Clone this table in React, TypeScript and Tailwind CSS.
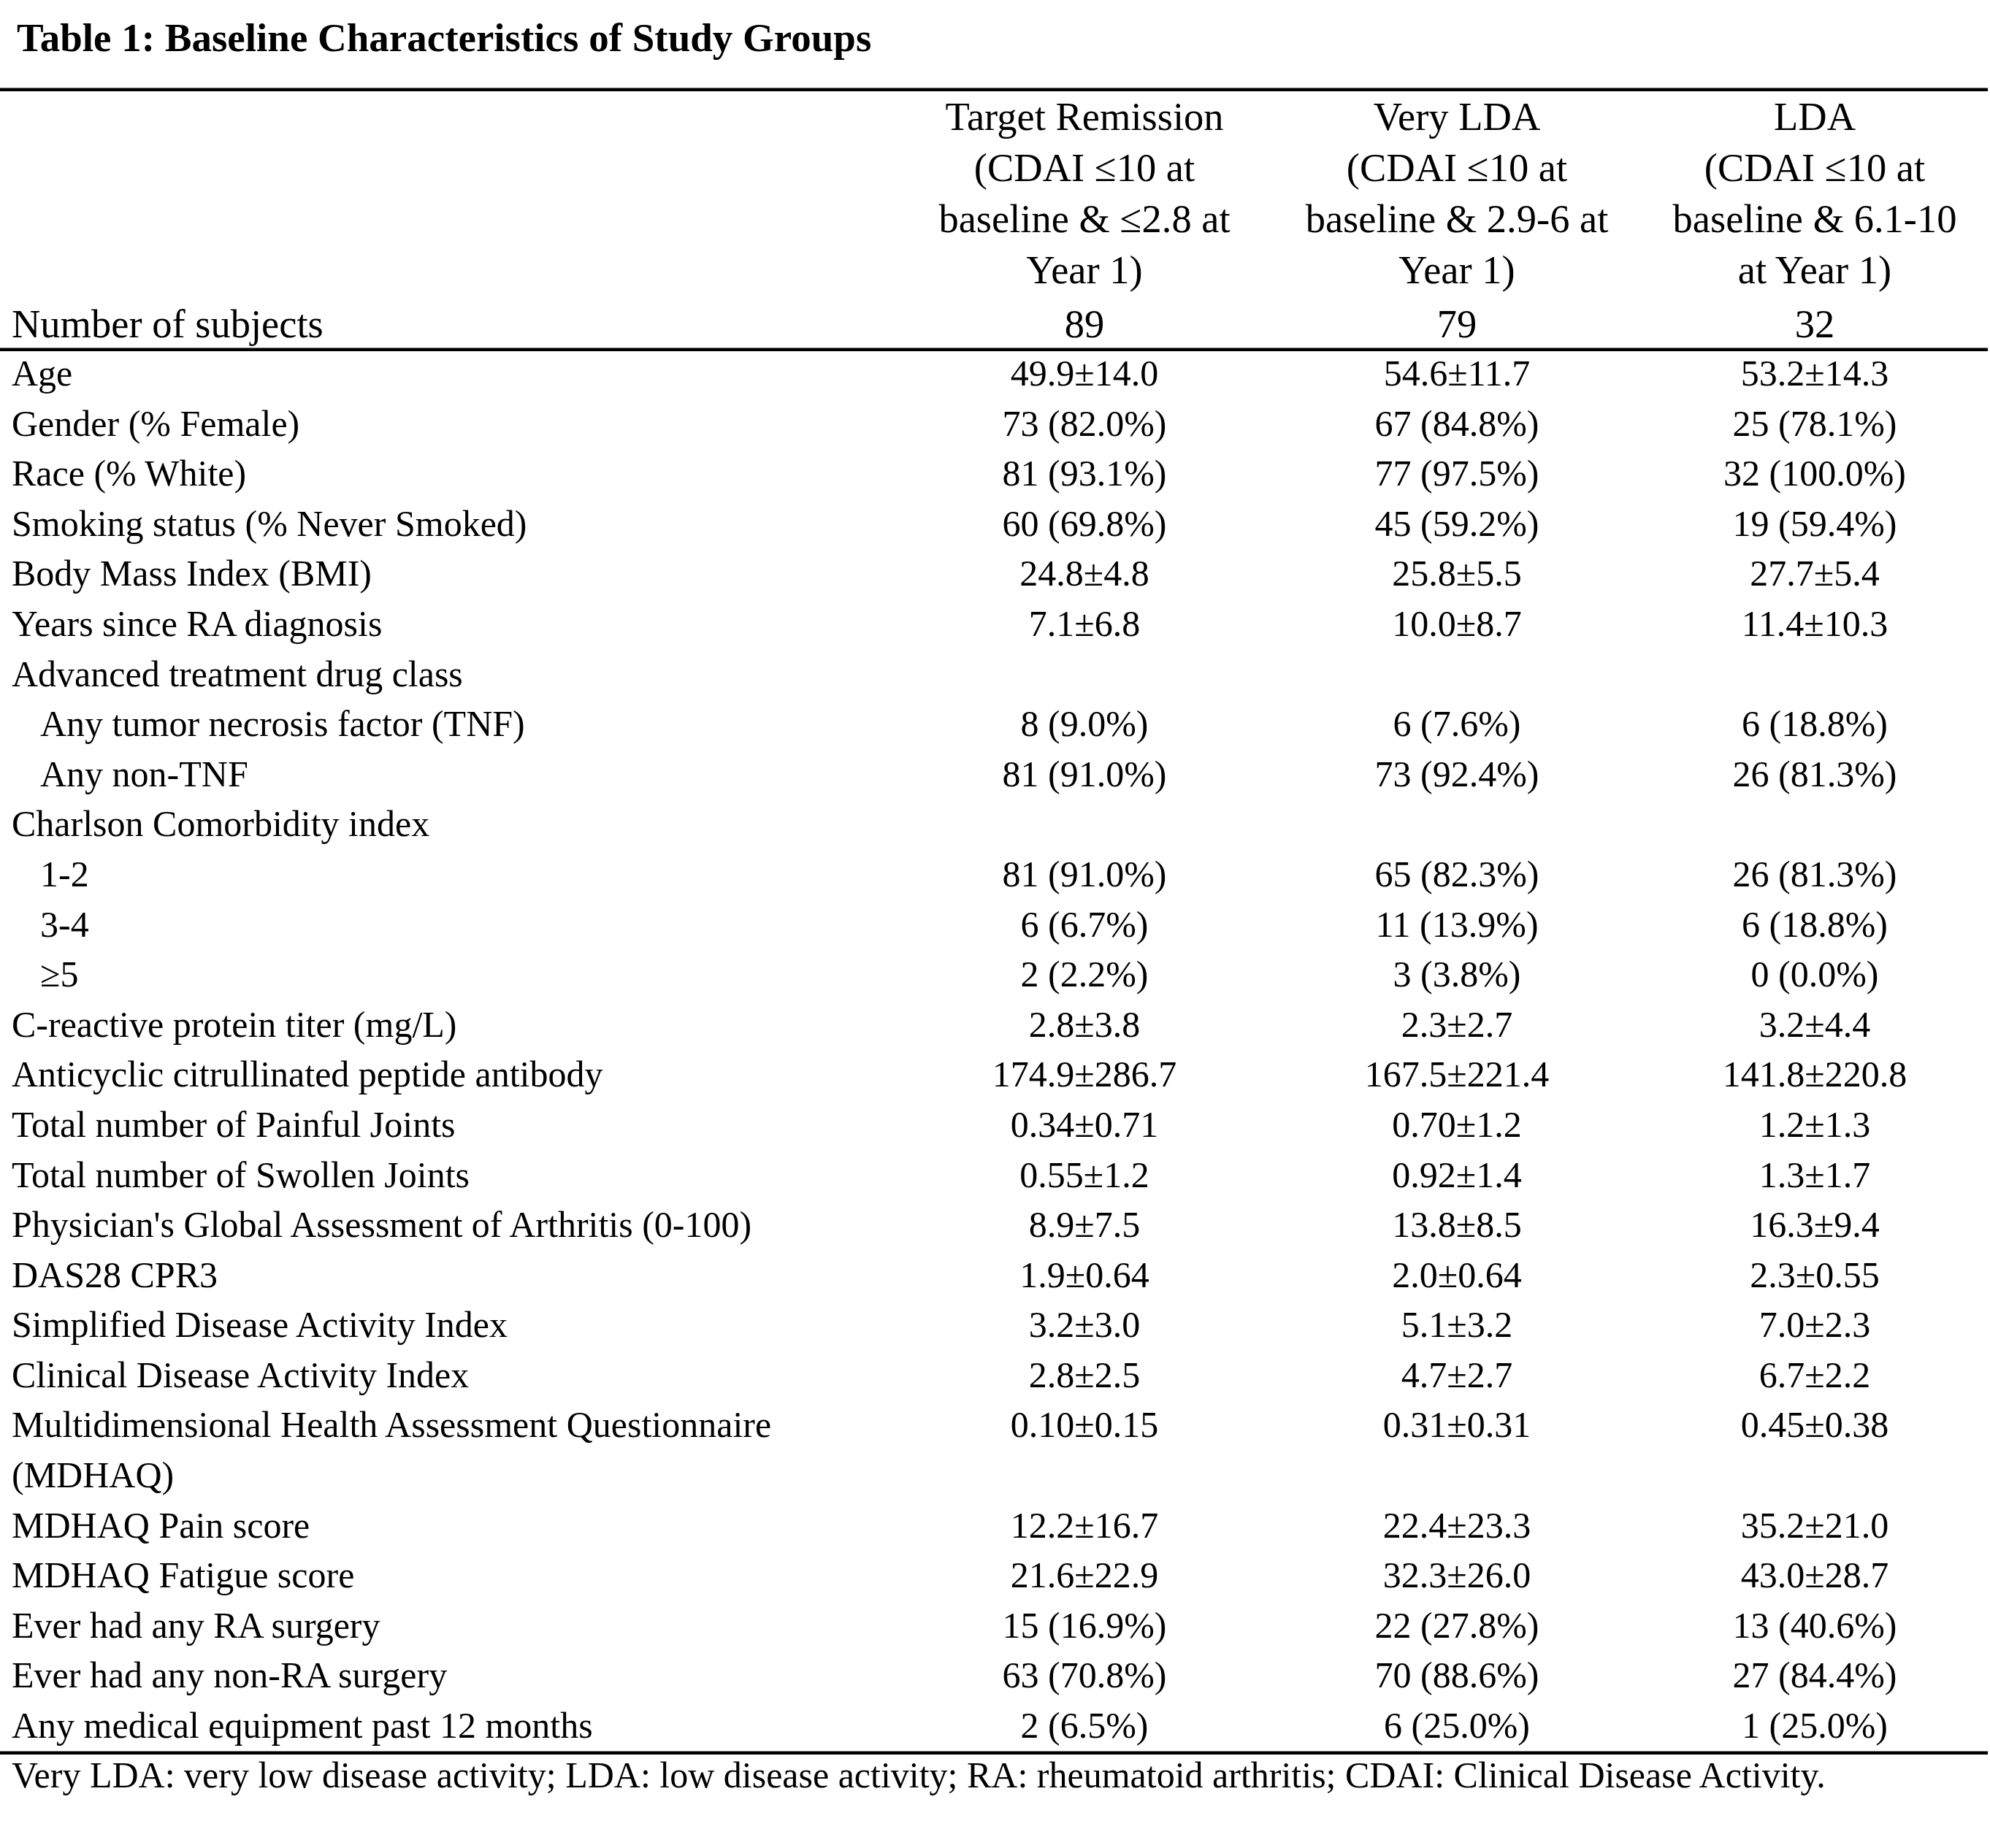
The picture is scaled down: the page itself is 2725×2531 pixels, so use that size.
import React from "react";

type Row = { label: React.ReactNode; v?: [string, string, string]; indent?: boolean };

const rows: Row[] = [
  { label: "Age", v: ["49.9±14.0", "54.6±11.7", "53.2±14.3"] },
  { label: "Gender (% Female)", v: ["73 (82.0%)", "67 (84.8%)", "25 (78.1%)"] },
  { label: "Race (% White)", v: ["81 (93.1%)", "77 (97.5%)", "32 (100.0%)"] },
  { label: "Smoking status (% Never Smoked)", v: ["60 (69.8%)", "45 (59.2%)", "19 (59.4%)"] },
  { label: "Body Mass Index (BMI)", v: ["24.8±4.8", "25.8±5.5", "27.7±5.4"] },
  { label: "Years since RA diagnosis", v: ["7.1±6.8", "10.0±8.7", "11.4±10.3"] },
  { label: "Advanced treatment drug class" },
  { label: "Any tumor necrosis factor (TNF)", v: ["8 (9.0%)", "6 (7.6%)", "6 (18.8%)"], indent: true },
  { label: "Any non-TNF", v: ["81 (91.0%)", "73 (92.4%)", "26 (81.3%)"], indent: true },
  { label: "Charlson Comorbidity index" },
  { label: "1-2", v: ["81 (91.0%)", "65 (82.3%)", "26 (81.3%)"], indent: true },
  { label: "3-4", v: ["6 (6.7%)", "11 (13.9%)", "6 (18.8%)"], indent: true },
  { label: "≥5", v: ["2 (2.2%)", "3 (3.8%)", "0 (0.0%)"], indent: true },
  { label: "C-reactive protein titer (mg/L)", v: ["2.8±3.8", "2.3±2.7", "3.2±4.4"] },
  { label: "Anticyclic citrullinated peptide antibody", v: ["174.9±286.7", "167.5±221.4", "141.8±220.8"] },
  { label: "Total number of Painful Joints", v: ["0.34±0.71", "0.70±1.2", "1.2±1.3"] },
  { label: "Total number of Swollen Joints", v: ["0.55±1.2", "0.92±1.4", "1.3±1.7"] },
  { label: "Physician's Global Assessment of Arthritis (0-100)", v: ["8.9±7.5", "13.8±8.5", "16.3±9.4"] },
  { label: "DAS28 CPR3", v: ["1.9±0.64", "2.0±0.64", "2.3±0.55"] },
  { label: "Simplified Disease Activity Index", v: ["3.2±3.0", "5.1±3.2", "7.0±2.3"] },
  { label: "Clinical Disease Activity Index", v: ["2.8±2.5", "4.7±2.7", "6.7±2.2"] },
  {
    label: (
      <>
        Multidimensional Health Assessment Questionnaire
        <br />
        (MDHAQ)
      </>
    ),
    v: ["0.10±0.15", "0.31±0.31", "0.45±0.38"],
  },
  { label: "MDHAQ Pain score", v: ["12.2±16.7", "22.4±23.3", "35.2±21.0"] },
  { label: "MDHAQ Fatigue score", v: ["21.6±22.9", "32.3±26.0", "43.0±28.7"] },
  { label: "Ever had any RA surgery", v: ["15 (16.9%)", "22 (27.8%)", "13 (40.6%)"] },
  { label: "Ever had any non-RA surgery", v: ["63 (70.8%)", "70 (88.6%)", "27 (84.4%)"] },
  { label: "Any medical equipment past 12 months", v: ["2 (6.5%)", "6 (25.0%)", "1 (25.0%)"] },
];

const headers: string[][] = [
  ["Target Remission", "(CDAI ≤10 at", "baseline & ≤2.8 at", "Year 1)"],
  ["Very LDA", "(CDAI ≤10 at", "baseline & 2.9-6 at", "Year 1)"],
  ["LDA", "(CDAI ≤10 at", "baseline & 6.1-10", "at Year 1)"],
];

function Rule({ className = "" }: { className?: string }) {
  return <div className={"h-[5px] w-full bg-black border-t border-[#7a7a7a] " + className} />;
}

export default function App() {
  return (
    <div className="min-h-[2531px] w-[2725px] bg-white">
      <div className="w-[2722px] text-black font-['Liberation_Serif','Times_New_Roman',serif]">
        <div className="h-[120px] pl-[23px] pt-[24px] text-[55px] leading-[55px] font-bold">
          Table 1: Baseline Characteristics of Study Groups
        </div>
        <Rule />
        <div className="grid grid-cols-[1228px_514px_506px_474px] text-[54.5px] leading-[70px]">
          <div />
          {headers.map((h, i) => (
            <div key={i} className="flex flex-col items-center text-center whitespace-nowrap">
              {h.map((line, j) => (
                <div key={j}>{line}</div>
              ))}
            </div>
          ))}
          <div className="pt-[4px] pl-[16px] whitespace-nowrap">Number of subjects</div>
          <div className="pt-[4px] text-center">89</div>
          <div className="pt-[4px] text-center">79</div>
          <div className="pt-[4px] text-center">32</div>
        </div>
        <Rule className="mt-[-3px]" />
        <div className="mt-[-4px] text-[50px] leading-[68.6px]">
          {rows.map((r, i) => (
            <div key={i} className="grid grid-cols-[1228px_514px_506px_474px]">
              <div className={(r.indent ? "pl-[55px]" : "pl-[16px]") + " whitespace-nowrap"}>{r.label}</div>
              {r.v ? (
                r.v.map((val, j) => (
                  <div key={j} className="text-center whitespace-nowrap">
                    {val}
                  </div>
                ))
              ) : (
                <>
                  <div />
                  <div />
                  <div />
                </>
              )}
            </div>
          ))}
        </div>
        <Rule />
        <div className="mt-[-6px] pl-[16px] text-[50px] leading-[68.6px] whitespace-nowrap">
          Very LDA: very low disease activity; LDA: low disease activity; RA: rheumatoid arthritis; CDAI: Clinical
          Disease Activity.
        </div>
      </div>
    </div>
  );
}
